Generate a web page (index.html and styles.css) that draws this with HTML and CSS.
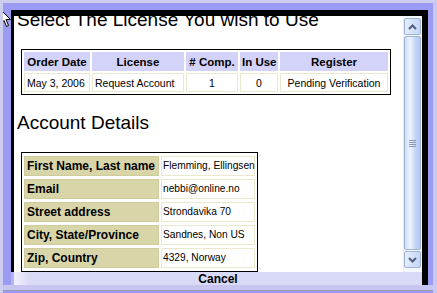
FILE: index.html
```html
<!DOCTYPE html>
<html lang="en">
<head>
    <meta charset="UTF-8">
    <title>Select License</title>
    <link rel="stylesheet" href="styles.css">
</head>
<body>
<div class="screen">
    <div class="frame">
        <div class="panel">
            <div class="contenido">
                <h2 class="titulo">Select The License You wish to Use</h2>
                <table class="licencias">
                    <tr>
                        <th class="c-fecha">Order Date</th>
                        <th class="c-lic">License</th>
                        <th class="c-comp">#&nbsp;Comp.</th>
                        <th class="c-uso">In Use</th>
                        <th class="c-reg">Register</th>
                    </tr>
                    <tr>
                        <td>May 3, 2006</td>
                        <td>Request Account</td>
                        <td class="centro">1</td>
                        <td class="centro">0</td>
                        <td class="centro">Pending Verification</td>
                    </tr>
                </table>

                <h2 class="subtitulo">Account Details</h2>
                <table class="cuenta">
                    <tr><th>First Name, Last name</th><td>Flemming, Ellingsen</td></tr>
                    <tr><th>Email</th><td>nebbi@online.no</td></tr>
                    <tr><th>Street address</th><td>Strondavika 70</td></tr>
                    <tr><th>City, State/Province</th><td>Sandnes, Non US</td></tr>
                    <tr><th>Zip, Country</th><td>4329, Norway</td></tr>
                </table>
            </div>
            <div class="scroll">
                <div class="flecha">
                    <svg width="9" height="6" viewBox="0 0 9 6"><path d="M1 5 L4.5 1.5 L8 5" fill="none" stroke="#4b6183" stroke-width="2"/></svg>
                </div>
                <div class="barra">
                    <div class="agarre"><span></span><span></span><span></span><span></span></div>
                </div>
                <div class="flecha">
                    <svg width="9" height="6" viewBox="0 0 9 6"><path d="M1 1 L4.5 4.5 L8 1" fill="none" stroke="#4b6183" stroke-width="2"/></svg>
                </div>
            </div>
        </div>
        <div class="cancelar">Cancel</div>
    </div>
    <div class="borde-inferior"></div>

    <svg class="cursor" width="11" height="19" viewBox="0 0 11 19">
        <path d="M0.5 0.5 L0.5 15 L4 11.5 L6.5 17.5 L8.5 16.5 L6 10.5 L10.5 10.5 Z" fill="#fff" stroke="#000" stroke-width="1"/>
    </svg>
</div>
</body>
</html>
```

FILE: styles.css
```css
body {
    margin: 0;
    font-family: "Liberation Sans", Arial, sans-serif;
}
.screen {
    position: relative;
    width: 437px;
    height: 293px;
    box-sizing: border-box;
    background: #9b9bf3;
    border-top: 3px solid #cdcdee;
    border-left: 3px solid #cdcdee;
    border-right: 4px solid #c9c9ee;
    padding: 7px 0 0 8px;
    overflow: hidden;
}
.frame {
    width: 417px;
    box-sizing: border-box;
    border-top: 6px solid #000;
    border-right: 6px solid #000;
}
.panel {
    display: flex;
    height: 256px;
    background: #fff;
    border-left: 3px solid #000;
}
.contenido {
    flex: 1;
    overflow: hidden;
    padding: 0 3px;
}
.titulo {
    margin: -7px 0 0 0;
    font-size: 19px;
    line-height: 22px;
    font-weight: normal;
    color: #000;
    white-space: nowrap;
}
.subtitulo {
    margin: 17px 0 0 0;
    font-size: 19px;
    line-height: 22px;
    font-weight: normal;
    color: #000;
}
table {
    border: 1px solid #000;
    margin-left: 4px;
    font-size: 10.5px;
    color: #000;
    table-layout: fixed;
}
th, td {
    white-space: nowrap;
    vertical-align: middle;
    box-sizing: border-box;
}
.licencias {
    margin-top: 18px;
    border-spacing: 2px;
    width: 369px;
}
.licencias th {
    background: #d3d3fa;
    font-size: 11.5px;
    padding: 0 2px;
    height: 19px;
    line-height: 14px;
    text-align: center;
}
.licencias td {
    border: 1px solid #ebe9cd;
    padding: 0 2px;
    height: 19px;
    line-height: 14px;
}
.c-fecha { width: 66px; }
.c-lic { width: 92px; }
.c-comp { width: 52px; }
.c-uso { width: 38px; }
.c-reg { width: 108px; }
.centro {
    text-align: center;
}
.cuenta {
    margin-top: 18px;
    border-spacing: 2px 3px;
    width: 237px;
}
.cuenta th {
    background: #d8d5a9;
    border: 1px solid #cfcb9d;
    font-size: 12px;
    padding: 0 2px;
    height: 20px;
    line-height: 14px;
    text-align: left;
    width: 135px;
}
.cuenta td {
    border: 1px solid #ebe9cd;
    padding: 0 1px;
    height: 20px;
    line-height: 14px;
    font-size: 10.2px;
}
.scroll {
    width: 17px;
    display: flex;
    flex-direction: column;
    padding: 2px 1px 4px 0;
    border-left: 1px solid #e6ecf6;
    background: #f4f7fc;
}
.flecha {
    height: 17px;
    box-sizing: border-box;
    border: 1px solid #9fb2d2;
    border-radius: 2px;
    background: linear-gradient(to right, #e4eefc, #c3d6f6);
    display: flex;
    align-items: center;
    justify-content: center;
}
.barra {
    flex: 1;
    margin: 1px 0;
    box-sizing: border-box;
    border: 1px solid #9fb2d2;
    border-radius: 2px;
    background: linear-gradient(to right, #cfdefa, #eef4fe 35%, #c3d6f6 70%, #b4c9f2);
    display: flex;
    align-items: center;
    justify-content: center;
}
.agarre {
    display: flex;
    flex-direction: column;
    gap: 1px;
}
.agarre span {
    display: block;
    width: 7px;
    height: 1px;
    background: #8a9ab6;
}
.cancelar {
    height: 13px;
    line-height: 14px;
    background: linear-gradient(to right, #f0f0fd, #d9d9f8 4%, #d9d9f8);
    border-left: 3px solid #b4b4f4;
    font-size: 12px;
    font-weight: bold;
    text-align: center;
    color: #000;
}
.borde-inferior {
    margin-left: -8px;
    height: 5px;
    background: #c6c6f0;
    border-bottom: 1px solid #9a9aae;
}
.cursor {
    position: absolute;
    left: -3px;
    top: 6px;
}
```
